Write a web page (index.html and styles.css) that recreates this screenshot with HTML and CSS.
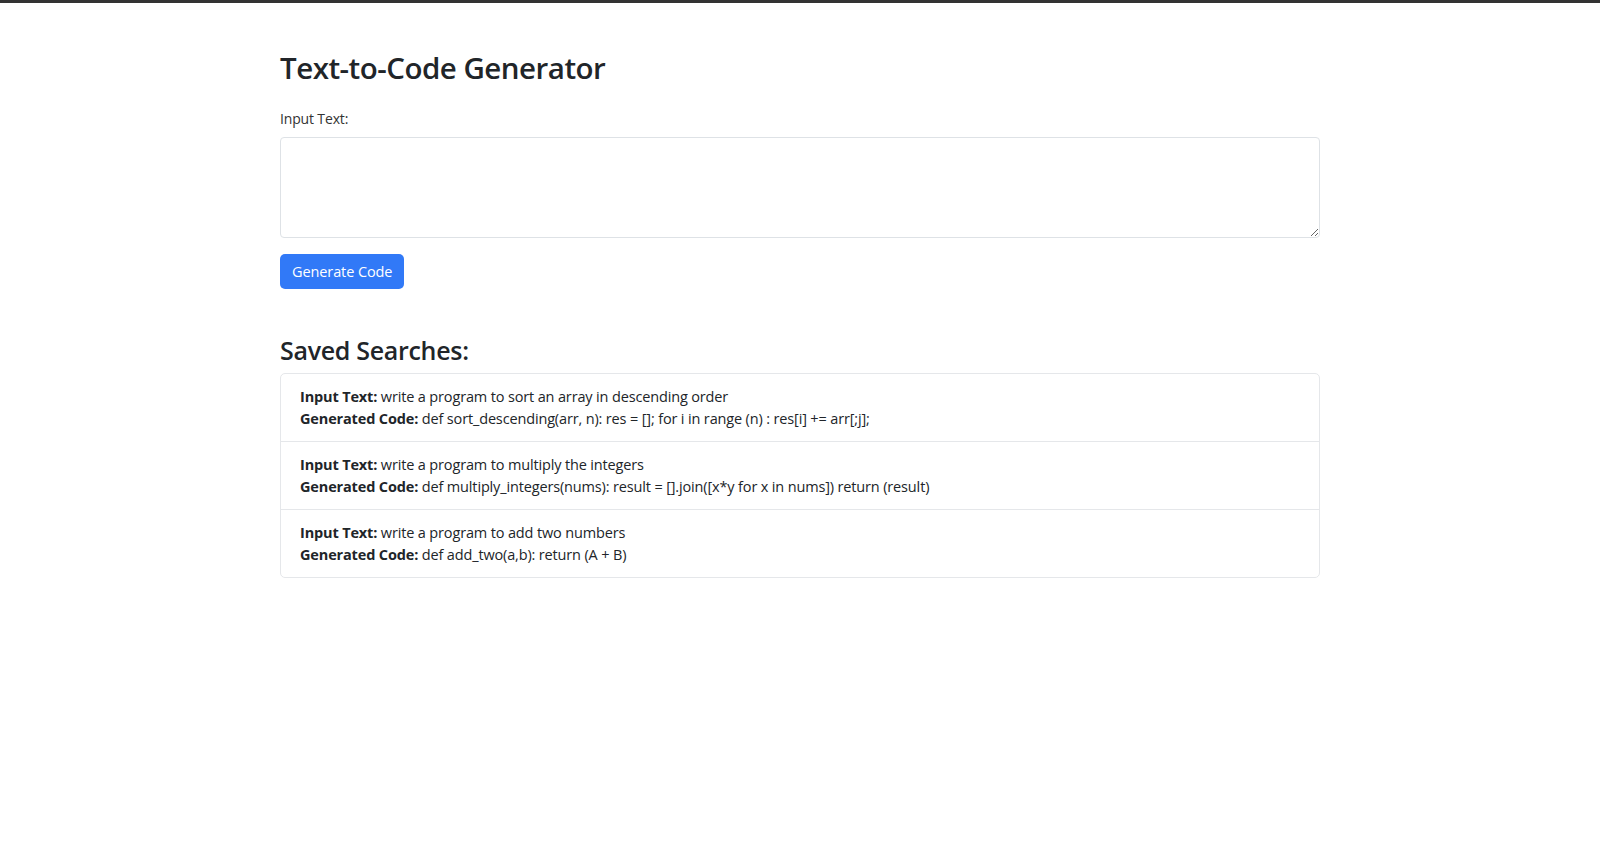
FILE: index.html
```html
<!DOCTYPE html>
<html lang="en">
<head>
<meta charset="utf-8">
<title>Text-to-Code Generator</title>
<link rel="stylesheet" href="styles.css">
</head>
<body>
<div class="topbar"></div>
<main class="container">
  <h1 class="title">Text-to-Code Generator</h1>
  <form class="form">
    <label class="label" for="input">Input Text:</label>
    <textarea id="input" class="input"></textarea>
    <button type="button" class="btn">Generate Code</button>
  </form>
  <h2 class="subtitle">Saved Searches:</h2>
  <ul class="list">
    <li class="item">
      <div><strong>Input Text:</strong> write a program to sort an array in descending order</div>
      <div><strong>Generated Code:</strong> def sort_descending(arr, n): res = []; for i in range (n) : res[i] += arr[;j];</div>
    </li>
    <li class="item">
      <div><strong>Input Text:</strong> write a program to multiply the integers</div>
      <div><strong>Generated Code:</strong> def multiply_integers(nums): result = [].join([x*y for x in nums]) return (result)</div>
    </li>
    <li class="item">
      <div><strong>Input Text:</strong> write a program to add two numbers</div>
      <div><strong>Generated Code:</strong> def add_two(a,b): return (A + B)</div>
    </li>
  </ul>
</main>
</body>
</html>
```
FILE: styles.css
```css
* { box-sizing: border-box; }
html, body { margin: 0; padding: 0; }
body {
  font-family: "Open Sans", "Noto Sans", sans-serif;
  font-size: 14.5px;
  letter-spacing: -0.15px;
  line-height: 22.5px;
  color: #212529;
  background: #fff;
}
.topbar { height: 3px; background: #333; }
.container { width: 1040px; margin: 0 auto; }
.title {
  margin: 46px 0 20px;
  font-size: 29.5px;
  letter-spacing: -0.5px;
  line-height: 38px;
  font-weight: 600;
}
.form { display: flex; flex-direction: column; align-items: flex-start; }
.label { color: #333; margin: 1px 0 6px; font-size: 14px; }
.input {
  width: 100%;
  height: 101px;
  border: 1px solid #dee2e6;
  border-radius: 4px;
  font: inherit;
  resize: vertical;
  margin: 0 0 16px;
}
.btn {
  height: 35px;
  padding: 2px 12px 0;
  background: #3179f7;
  color: #fff;
  border: 0;
  border-radius: 5px;
  font: inherit;
  font-size: 14.5px;
  letter-spacing: -0.1px;
}
.subtitle {
  margin: 46px 0 8px;
  font-size: 25px;
  letter-spacing: -0.3px;
  line-height: 30px;
  font-weight: 600;
}
.list {
  list-style: none;
  margin: 0;
  padding: 0;
  border: 1px solid #e5e7ea;
  border-radius: 5px;
}
.item { padding: 12px 19px 10px; }
.item + .item { border-top: 1px solid #e5e7ea; }
.item strong { font-weight: 700; }
```
